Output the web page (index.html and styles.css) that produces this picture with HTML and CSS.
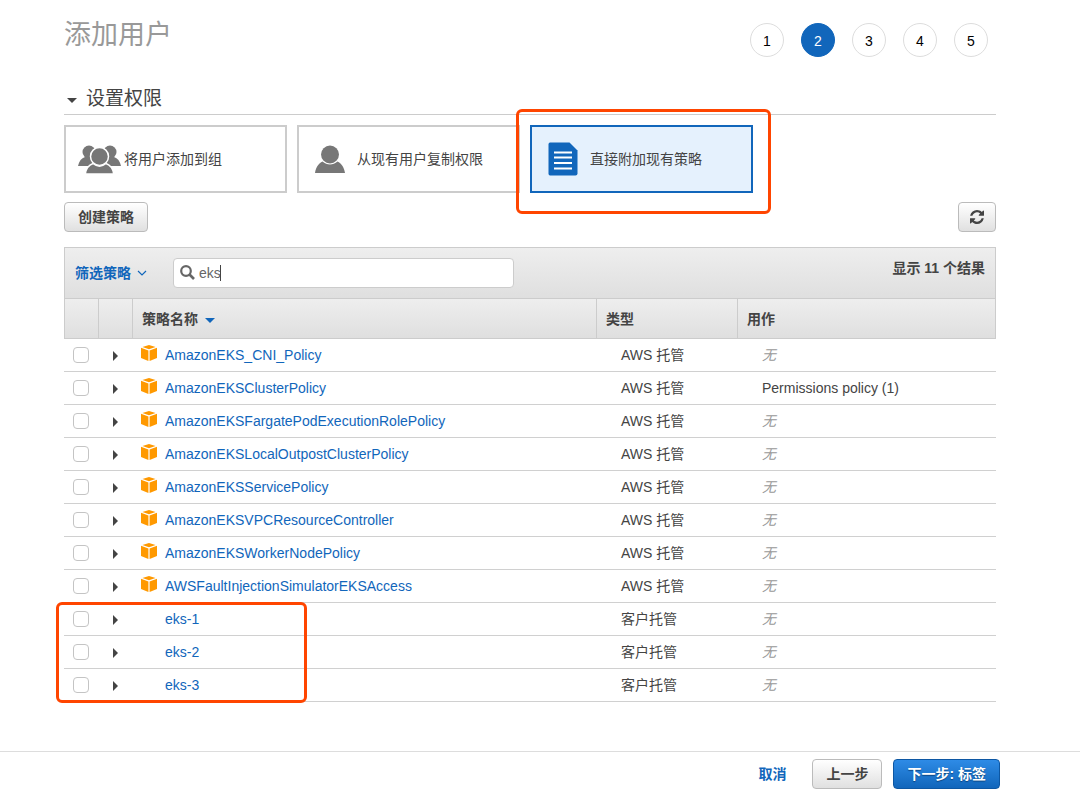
FILE: index.html
```html
<!DOCTYPE html>
<html lang="zh-CN">
<head>
<meta charset="utf-8">
<meta name="viewport" content="width=device-width, initial-scale=1">
<title>添加用户</title>
<link rel="stylesheet" href="styles.css">
</head>
<body>
<svg class="sprite" aria-hidden="true">
  <symbol id="cube" viewBox="0 0 16 16">
    <path fill="#ff9900" d="M8 0 14.600 1.900 8 4.300 1.400 1.900ZM0 2.700 7.400 5.400V16L0 13.100ZM16 2.700 8.600 5.400V16L16 13.100Z"/>
  </symbol>
</svg>
<main class="page">
  <header class="top">
    <h1 class="title">添加用户</h1>
    <ol class="steps">
      <li class="step">1</li>
      <li class="step step-current" aria-current="step">2</li>
      <li class="step">3</li>
      <li class="step">4</li>
      <li class="step">5</li>
    </ol>
  </header>

  <h2 class="section"><span class="arrow-down"></span>设置权限</h2>

  <div class="cards">
    <button class="card" type="button">
      <svg class="card-icon icon-group" width="44" height="30" viewBox="0 0 44 30" fill="#777">
        <circle cx="11" cy="8" r="6.500"/><circle cx="32" cy="8" r="6.500"/>
        <path d="M0 22c1-5 3.500-8 7-9h29c3.500 1 6 4 7 9Z"/>
        <g stroke="#fff" stroke-width="1.500"><circle cx="21.500" cy="12.500" r="9"/><path d="M7.300 30c.7-5.500 3.500-9 7.700-10.500 4 3.300 9 3.300 13 0 4.200 1.500 7 5 7.700 10.500Z"/></g>
      </svg>
      将用户添加到组
    </button>
    <button class="card" type="button">
      <svg class="card-icon icon-user" width="30" height="28" viewBox="0 0 30 28" fill="#777">
        <circle cx="15" cy="9.500" r="9"/>
        <path d="M0 28c1-6 3.500-9.500 7.500-11.500 4.500 4 10.500 4 15 0C26.500 18.500 29 22 30 28Z"/>
      </svg>
      从现有用户复制权限
    </button>
    <div class="card-marked">
      <button class="card card-selected" type="button" aria-pressed="true">
        <svg class="card-icon icon-doc" width="30" height="34" viewBox="0 0 30 34">
          <path fill="#1166bb" d="M2 0.500H21.500L29.500 8.500V31.500Q29.500 33.500 27.500 33.500H2Q0.500 33.500 0.500 31.500V2.500Q0.500 0.500 2 0.500Z"/>
          <path stroke="#fff" stroke-width="2" d="M6 10.500H24M6 15.500H24M6 21H24M6 26.500H24"/>
        </svg>
        直接附加现有策略
      </button>
      <span class="mark mark-card"></span>
    </div>
  </div>

  <div class="actions">
    <button class="btn" type="button">创建策略</button>
    <button class="btn btn-icon" type="button" aria-label="刷新">
      <svg width="14" height="14" viewBox="0 0 1536 1536" fill="#444"><path d="M1511 928q0 5-1 7-64 268-268 434.500T764 1536q-146 0-282.500-55T238 1324l-129 129q-19 19-45 19t-45-19-19-45V960q0-26 19-45t45-19h448q26 0 45 19t19 45-19 45l-137 137q71 66 161 102t187 36q134 0 250-65t186-179q11-17 53-117 8-23 30-23h192q13 0 22.500 9.500t9.500 22.500zm25-800v448q0 26-19 45t-45 19h-448q-26 0-45-19t-19-45 19-45l138-138Q969 256 768 256q-134 0-250 65T332 500q-11 17-53 117-8 23-30 23H50q-13 0-22.500-9.500T18 608v-7q65-268 270-434.500T768 0q146 0 284 55.500T1297 212l130-129q19-19 45-19t45 19 19 45z"/></svg>
    </button>
  </div>

  <section class="list">
    <div class="toolbar">
      <button class="filter" type="button">筛选策略
        <svg width="10" height="6" viewBox="0 0 10 6" fill="none" stroke="#1166bb" stroke-width="1.200"><path d="M1 1 5 5 9 1"/></svg>
      </button>
      <div class="search">
        <svg width="15" height="15" viewBox="0 0 15 15" fill="none" stroke="#666"><circle cx="6" cy="6" r="4.800" stroke-width="2.200"/><path d="M9.500 9.500 14 14" stroke-width="2.600"/></svg>
        <input class="search-input" type="text" value="eks" aria-label="搜索策略">
        <span class="caret"></span>
      </div>
      <p class="count">显示 11 个结果</p>
    </div>
    <table class="policies">
      <colgroup><col class="c-check"><col class="c-open"><col class="c-name"><col class="c-type"><col></colgroup>
      <thead>
        <tr><th></th><th></th><th>策略名称<span class="sort"></span></th><th>类型</th><th>用作</th></tr>
      </thead>
      <tbody>
        <tr><td><input class="check" type="checkbox" aria-label="AmazonEKS_CNI_Policy"></td><td><button class="open" type="button" aria-label="展开"></button></td><td><div class="name"><svg class="cube"><use href="#cube"/></svg><a href="#">AmazonEKS_CNI_Policy</a></div></td><td>AWS 托管</td><td><i class="none">无</i></td></tr>
        <tr><td><input class="check" type="checkbox" aria-label="AmazonEKSClusterPolicy"></td><td><button class="open" type="button" aria-label="展开"></button></td><td><div class="name"><svg class="cube"><use href="#cube"/></svg><a href="#">AmazonEKSClusterPolicy</a></div></td><td>AWS 托管</td><td>Permissions policy (1)</td></tr>
        <tr><td><input class="check" type="checkbox" aria-label="AmazonEKSFargatePodExecutionRolePolicy"></td><td><button class="open" type="button" aria-label="展开"></button></td><td><div class="name"><svg class="cube"><use href="#cube"/></svg><a href="#">AmazonEKSFargatePodExecutionRolePolicy</a></div></td><td>AWS 托管</td><td><i class="none">无</i></td></tr>
        <tr><td><input class="check" type="checkbox" aria-label="AmazonEKSLocalOutpostClusterPolicy"></td><td><button class="open" type="button" aria-label="展开"></button></td><td><div class="name"><svg class="cube"><use href="#cube"/></svg><a href="#">AmazonEKSLocalOutpostClusterPolicy</a></div></td><td>AWS 托管</td><td><i class="none">无</i></td></tr>
        <tr><td><input class="check" type="checkbox" aria-label="AmazonEKSServicePolicy"></td><td><button class="open" type="button" aria-label="展开"></button></td><td><div class="name"><svg class="cube"><use href="#cube"/></svg><a href="#">AmazonEKSServicePolicy</a></div></td><td>AWS 托管</td><td><i class="none">无</i></td></tr>
        <tr><td><input class="check" type="checkbox" aria-label="AmazonEKSVPCResourceController"></td><td><button class="open" type="button" aria-label="展开"></button></td><td><div class="name"><svg class="cube"><use href="#cube"/></svg><a href="#">AmazonEKSVPCResourceController</a></div></td><td>AWS 托管</td><td><i class="none">无</i></td></tr>
        <tr><td><input class="check" type="checkbox" aria-label="AmazonEKSWorkerNodePolicy"></td><td><button class="open" type="button" aria-label="展开"></button></td><td><div class="name"><svg class="cube"><use href="#cube"/></svg><a href="#">AmazonEKSWorkerNodePolicy</a></div></td><td>AWS 托管</td><td><i class="none">无</i></td></tr>
        <tr><td><input class="check" type="checkbox" aria-label="AWSFaultInjectionSimulatorEKSAccess"></td><td><button class="open" type="button" aria-label="展开"></button></td><td><div class="name"><svg class="cube"><use href="#cube"/></svg><a href="#">AWSFaultInjectionSimulatorEKSAccess</a></div></td><td>AWS 托管</td><td><i class="none">无</i></td></tr>
        <tr><td class="mark-anchor"><input class="check" type="checkbox" aria-label="eks-1"><span class="mark mark-rows"></span></td><td><button class="open" type="button" aria-label="展开"></button></td><td><div class="name name-plain"><a href="#">eks-1</a></div></td><td>客户托管</td><td><i class="none">无</i></td></tr>
        <tr><td><input class="check" type="checkbox" aria-label="eks-2"></td><td><button class="open" type="button" aria-label="展开"></button></td><td><div class="name name-plain"><a href="#">eks-2</a></div></td><td>客户托管</td><td><i class="none">无</i></td></tr>
        <tr><td><input class="check" type="checkbox" aria-label="eks-3"></td><td><button class="open" type="button" aria-label="展开"></button></td><td><div class="name name-plain"><a href="#">eks-3</a></div></td><td>客户托管</td><td><i class="none">无</i></td></tr>
      </tbody>
    </table>
  </section>
</main>
<footer class="footer">
  <a class="cancel" href="#">取消</a>
  <button class="btn" type="button">上一步</button>
  <button class="btn btn-primary" type="button">下一步: 标签</button>
</footer>
</body>
</html>
```
FILE: styles.css
```css
* { box-sizing: border-box; }
body {
  margin: 0;
  min-height: 100vh;
  display: flex;
  flex-direction: column;
  background: #fff;
  color: #444;
  font: 14px/20px "Liberation Sans", "Noto Sans CJK SC", sans-serif;
}
button, input { font: inherit; color: inherit; }
a { color: #1166bb; text-decoration: none; }
.sprite { position: absolute; width: 0; height: 0; }

.page { padding: 15px 84px 32px 64px; }
.top { display: flex; justify-content: space-between; align-items: flex-start; }
.title { margin: 0; font-size: 27px; line-height: 40px; font-weight: 400; color: #999; }
.steps { display: flex; gap: 17px; margin: 0; padding: 8px 8px 0 0; list-style: none; }
.step {
  width: 34px; height: 34px;
  border: 1px solid #ddd; border-radius: 50%;
  line-height: 34px; text-align: center; color: #000;
}
.step-current { background: #1166bb; border-color: #1166bb; color: #fff; }

.section {
  display: flex; align-items: center; gap: 9px;
  margin: 28px 0 10px; padding: 0 0 1px 3px;
  border-bottom: 1px solid #ccc;
  font-size: 19px; line-height: 28px; font-weight: 400;
}
.arrow-down { margin-top: 3px; border: 5px solid transparent; border-top-color: #444; border-bottom: 0; }

.cards { display: grid; grid-template-columns: repeat(3, 223px); gap: 10px; }
.card {
  display: flex; align-items: center;
  width: 100%; height: 68px; padding: 0 12px;
  background: #fff; border: 2px solid #ccc; text-align: left;
}
.card-selected { background: #e5f1fd; border-color: #1166bb; }
.card-icon { flex: none; }
.icon-group { margin-right: 2px; }
.icon-user { margin: 0 12px 0 4px; }
.icon-doc { margin: 0 12px 0 4px; }
.card-marked { position: relative; }
.mark {
  position: absolute; z-index: 1;
  border: 3px solid #ff4500; border-radius: 6px;
  pointer-events: none;
}
.mark-card { inset: -16px -18px -21px -14px; }

.actions { display: flex; justify-content: space-between; padding: 9px 0 15px; }
.btn {
  height: 30px; padding: 0 13px;
  border: 1px solid #bbb; border-radius: 4px;
  background: linear-gradient(#fff, #e0e0e0);
  font-weight: 700;
}
.btn-icon { width: 38px; padding: 0 11px; }
.btn-icon svg { display: block; }
.btn-primary {
  border-color: #0d57a3;
  background: linear-gradient(#2e8be6, #1166bb);
  color: #fff; text-shadow: 0 1px 1px #0b4580;
}

.toolbar {
  display: flex; align-items: center;
  height: 51px; padding: 0 10px;
  border: 1px solid #ccc; border-bottom: 0;
  background: linear-gradient(#eee, #dfdfdf);
}
.filter {
  display: flex; align-items: center; gap: 6px;
  width: 98px; padding: 0; border: 0; background: none;
  color: #1166bb; font-weight: 700; white-space: nowrap;
}
.search { position: relative; width: 341px; }
.search svg { position: absolute; left: 7px; top: 7px; }
.search-input {
  display: block; width: 100%; height: 30px; padding: 0 10px 0 25px;
  border: 1px solid #ccc; border-radius: 4px; background: #fff; color: #666;
}
.caret { position: absolute; left: 47px; top: 7px; width: 1px; height: 16px; background: #444; }
.count { align-self: flex-start; margin: 10px 0 0 auto; font-weight: 700; }

.policies { width: 100%; table-layout: fixed; border-collapse: separate; border-spacing: 0; }
.c-check, .c-open { width: 34px; }
.c-name { width: 464px; }
.c-type { width: 141px; }
th {
  height: 41px; padding: 0 9px;
  border: solid #ccc; border-width: 1px 0 1px 1px;
  background: linear-gradient(#eee, #dfdfdf);
  text-align: left; font-weight: 700;
}
th:last-child { border-right-width: 1px; }
.sort { display: inline-block; margin-left: 7px; vertical-align: 1px; border: 5px solid transparent; border-top-color: #1166bb; border-bottom: 0; }
td { height: 33px; padding: 0 10px 0 25px; border-bottom: 1px solid #d0d0d0; }
td:nth-child(1) { padding: 0 9px; }
td:nth-child(2) { padding: 0 15px; }
td:nth-child(3) { padding: 0 9px; }
.check {
  appearance: none; display: block;
  width: 16px; height: 16px; margin: 0;
  border: 1px solid #c4c4c4; border-radius: 4px; background: #fff;
}
.check:checked { background: #1166bb; }
.open {
  display: block; width: 5px; height: 10px; margin: 2px 0 0; padding: 0;
  border: solid transparent; border-width: 5px 0 5px 5px; border-left-color: #444;
  background: none;
}
.name { display: flex; align-items: center; gap: 8px; }
.name-plain { padding-left: 24px; }
.cube { width: 16px; height: 16px; margin-bottom: 4px; }
.none { color: #999; }
.mark-anchor { position: relative; }
.mark-rows { left: -8px; top: -1px; width: 251px; height: 101px; }

.footer {
  display: flex; justify-content: flex-end; align-items: center; gap: 11px;
  margin-top: auto; padding: 7px 80px 6px 64px;
  border-top: 1px solid #ddd;
}
.cancel { margin-right: 15px; font-weight: 700; }
```
